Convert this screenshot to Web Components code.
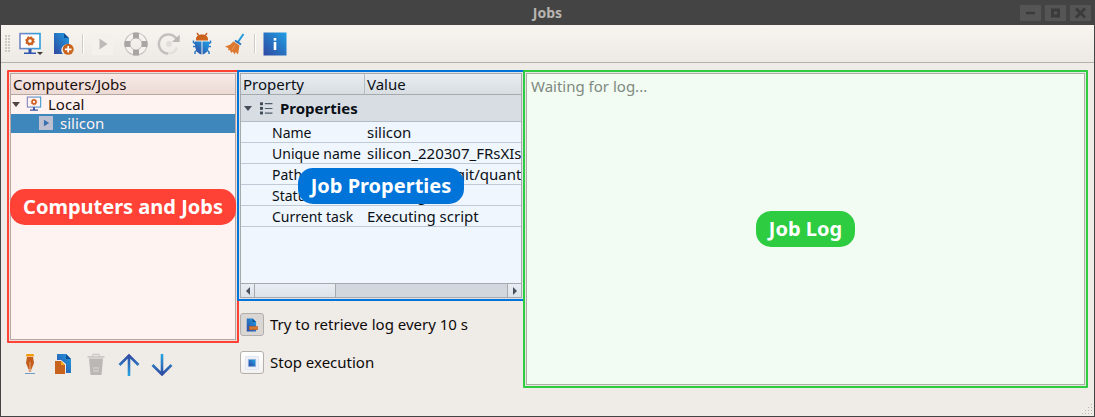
<!DOCTYPE html>
<html lang="en">
<head>
<meta charset="utf-8">
<title>Jobs</title>
<style>
  html, body { margin: 0; height: 100%; }
  body { font: 15px/18px "Noto Sans", "Open Sans", sans-serif; color: #0c0a09; background: #efebe7; }
</style>
</head>
<body>
<jobs-window></jobs-window>

<script>
const define = (name, html, setup) => {
  const template = document.createElement('template');
  template.innerHTML = html;
  customElements.define(name, class extends HTMLElement {
    constructor() {
      super();
      this.attachShadow({ mode: 'open' }).append(template.content.cloneNode(true));
    }
    connectedCallback() { if (setup) setup(this, this.shadowRoot); }
  });
};

const BLUE = '<linearGradient id="b" x1="1" y1="0" x2="0" y2="1"><stop offset="0" stop-color="#1f9fe4"/><stop offset="1" stop-color="#3048a0"/></linearGradient>';
const ORANGE = '<linearGradient id="o" x1="0" y1="0" x2="1" y2="1"><stop offset="0" stop-color="#c65a14"/><stop offset="1" stop-color="#cf6a22"/></linearGradient>';

/* All icons share a 24 x 24 grid. */
const ICONS = {
  computer: `<defs><linearGradient id="m"><stop offset="0" stop-color="#7486c4"/><stop offset="1" stop-color="#2a9fdc"/></linearGradient></defs>
    <rect x="2" y="1.600" width="20" height="15" fill="#fff" stroke="url(#m)" stroke-width="1.600"/>
    <path d="M10.500 17h3v3.400H18V22H6v-1.600h4.500z" fill="#3156ad"/>
    <circle cx="12" cy="9" r="2.900" fill="none" stroke="#cb6120" stroke-width="2.300"/>
    <circle cx="12" cy="9" r="4.200" fill="none" stroke="#cb6120" stroke-width="1.200" stroke-dasharray="1.650 1.650"/>`,
  newjob: `<path d="M3 1h10v5h5v6.500a5.800 5.800 0 0 0-6 9.500H3z" fill="url(#b)"/><path d="M13 1l5 5h-5z" fill="#0d4f94"/>
    <circle cx="17.200" cy="17.300" r="5.500" fill="url(#o)"/><path d="M17.200 14v6.600M13.900 17.300h6.600" stroke="#fff" stroke-width="1.700"/>`,
  play: `<rect x="1" y="2" width="21" height="21" fill="#f4f1ed"/><path d="M8.500 6.500l8 5.500-8 5.500z" fill="#bdbbb9"/>`,
  lifebuoy: `<circle cx="12" cy="12" r="8.600" fill="none" stroke="#bebcba" stroke-width="6"/><circle cx="12" cy="12" r="8.600" fill="none" stroke="#f5f3f0" stroke-width="4.200"/>
    <path d="M9 .8a11.500 11.500 0 0 1 6 0v5.400H9zM9 23.200a11.500 11.500 0 0 0 6 0v-5.400H9zM.8 9a11.500 11.500 0 0 0 0 6h5.400V9zM23.200 9a11.500 11.500 0 0 1 0 6h-5.400V9z" fill="#a8a5a3"/>`,
  redo: `<path d="M11 21.500A9.500 9.500 0 1 1 19.500 7" fill="none" stroke="#c3c1bf" stroke-width="2.500"/><path d="M22.700 2.500v7.500H15z" fill="#b9b7b5"/>
    <circle cx="12" cy="12" r="3" fill="#e0deda"/><path d="M11 21.500a9.500 9.500 0 0 0 9-6" fill="none" stroke="#e2e0dc" stroke-width="2.500"/>`,
  bug: `<path d="M7 1l2 3M17 1l-2 3" stroke="#cb6120" stroke-width="1.400"/><path d="M6 8.500V7a3 3 0 0 1 1-2.400C8.300 3 10 2.500 12 2.500s3.700.5 5 2.100A3 3 0 0 1 18 7v1.500z" fill="url(#o)"/>
    <path d="M6 12L3.500 10.500V8.500M18 12l2.500-1.500V8.500M6 14.500H3M18 14.500h3M7 18l-2 2v2M17 18l2 2v2" fill="none" stroke="#2d78c6" stroke-width="1.500"/>
    <path d="M5 9.500h6.500v13C7 21.500 4.500 17 5 9.500zM12.500 9.500H19C19.500 17 17 21.500 12.500 22.500z" fill="url(#b)"/>`,
  broom: `<path d="M20.500 2l-5.500 8" stroke="#269bdc" stroke-width="2"/><path d="M12 8.500l6 4" stroke="#2672bd" stroke-width="2"/>
    <path d="M10.500 9.500l6 4L15 22.500l-2.500-2.500-.8 2.500-2-3-1.200 1.500-1.700-3-1.800.2.500-2L2 14.500l5-1.800z" fill="#dc7830"/><path d="M12 13l-3 5" stroke="#efa267" stroke-width=".8"/>`,
  info: `<rect x=".5" y=".5" width="23" height="23" fill="url(#b)"/><rect x="10.700" y="6" width="2.600" height="2.600" fill="#fff"/><rect x="10.700" y="10" width="2.600" height="8" fill="#fff"/>`,
  pen: `<rect x="8" y="1" width="8" height="2.600" rx="1.200" fill="#f59b05"/><path d="M9 4h6l1 6-2.600 6.500h-2.800L8 10z" fill="#c45c1c"/>
    <path d="M12 9v7" stroke="#e7a77b"/><path d="M10.700 16.500h2.600v2.500h-2.600z" fill="#e4a67e"/><path d="M7 20.500h10" stroke="#6d9ccd"/>`,
  copy: `<path d="M6 1h9l5 5v14h-5V11l-5-4H6z" fill="url(#b)"/><path d="M15 1l5 5h-5z" fill="#0d4f94"/><path d="M4 8h6l4 4v9H4z" fill="#c8631d"/><path d="M10 8l4 4h-4z" fill="#fbb020"/>`,
  trash: `<path d="M3.500 3h17v1.800h-17z" fill="#cbc9c6"/><path d="M9 3V1.300h6V3" fill="none" stroke="#cbc9c6" stroke-width="1.300"/><path d="M5 5.500h14L17.500 22h-11z" fill="#bab7b5"/><path d="M9 14h6v5H9z" fill="#cbc9c6"/><path d="M9 16.500h6" stroke="#bab7b5"/>`,
  up: `<path d="M12 23V3M2.500 12L12 2.500 21.500 12" fill="none" stroke="url(#a)" stroke-width="2.600"/>`,
  down: `<path d="M12 1v20M2.500 12L12 21.500 21.500 12" fill="none" stroke="url(#d)" stroke-width="2.600"/>`,
  run: `<rect width="24" height="24" fill="#b8c9dc"/><path d="M8.500 6.500l9 5.500-9 5.500z" fill="#2b74b8"/>`,
  list: `<g fill="none" stroke="#3c4147" stroke-width="1.800"><rect x="1" y="1.500" width="3.500" height="3.500"/><rect x="1" y="10" width="3.500" height="3.500"/><rect x="1" y="18.500" width="3.500" height="3.500"/></g><path d="M9 3h14M9 12h14M9 20.500h14" stroke="#555b63" stroke-width="2"/>`,
  log: `<path d="M3 1h10l6 6v16H3z" fill="url(#b)"/><path d="M13 1l6 6h-6z" fill="#0d4f94"/><rect x="7" y="14" width="15" height="6.500" fill="#c8631d"/><path d="M9 17.200h11" stroke="#d98a52" stroke-width="2.500" stroke-dasharray="3 1"/>`,
  stop: `<rect x=".8" y=".8" width="22.400" height="22.400" fill="#f0f2f8" stroke="#e0e4ef" stroke-width="1.500"/><rect x="5" y="5" width="14" height="14" fill="#9ebde0"/><rect x="6.500" y="6.500" width="11" height="11" fill="url(#b)"/>`
};

define('ui-icon', `
  <style>
    :host { display: inline-block; width: 24px; height: 24px; flex: none; }
    svg { display: block; width: 100%; height: 100%; }
  </style>
  <svg viewBox="0 0 24 24" aria-hidden="true"></svg>`,
  (el, root) => {
    root.querySelector('svg').innerHTML = `<defs>${BLUE}${ORANGE}
      <linearGradient id="a" gradientUnits="userSpaceOnUse" x1="0" y1="23" x2="0" y2="2"><stop offset="0" stop-color="#27a5e2"/><stop offset="1" stop-color="#3048a0"/></linearGradient>
      <linearGradient id="d" gradientUnits="userSpaceOnUse" x1="0" y1="1" x2="0" y2="22"><stop offset="0" stop-color="#27a5e2"/><stop offset="1" stop-color="#3048a0"/></linearGradient></defs>` + ICONS[el.getAttribute('name')];
  });

define('tool-button', `
  <style>
    :host { display: block; flex: none; }
    button { position: relative; display: flex; align-items: center; justify-content: center; width: 33px; height: 33px; padding: 0; border: 0; background: none; }
    :host([menu]) button::after { content: ""; position: absolute; right: 3px; bottom: 5px; border: 3px solid transparent; border-top-color: #3b3a39; border-bottom: 0; }
  </style>
  <button type="button"></button>`,
  (el, root) => {
    const button = root.querySelector('button');
    button.innerHTML = `<ui-icon name="${el.getAttribute('icon')}"></ui-icon>`;
    button.setAttribute('aria-label', el.getAttribute('label'));
    button.disabled = el.hasAttribute('disabled');
  });

define('title-bar', `
  <style>
    :host { display: grid; grid-template-columns: 1fr auto 1fr; align-items: center; height: 25px; background: #444; color: #b8b5b0; }
    h1 { grid-column: 2; margin: 0; font: bold 14px/18px "Noto Sans", sans-serif; }
    div { display: flex; justify-content: flex-end; gap: 4px; padding-right: 3px; }
    button { width: 21px; height: 16px; padding: 0; border: 0; border-radius: 1px; background: #555; }
    svg { display: block; width: 21px; height: 16px; fill: none; stroke: #3b3b3b; stroke-width: 3; }
  </style>
  <h1><slot></slot></h1>
  <div>
    <button type="button" aria-label="Minimize"><svg viewBox="0 0 21 16"><path d="M6 8h9" stroke-width="2.500"/></svg></button>
    <button type="button" aria-label="Maximize"><svg viewBox="0 0 21 16"><rect x="7.500" y="5" width="6" height="6"/></svg></button>
    <button type="button" aria-label="Close"><svg viewBox="0 0 21 16"><path d="M6 3.500l9 9M15 3.500l-9 9"/></svg></button>
  </div>`);

define('tool-bar', `
  <style>
    :host { display: flex; align-items: center; height: 37px; padding-left: 4px; background: linear-gradient(#f8f5f1, #edeae6); border-bottom: 1px solid #b5b1ad; }
    .grip { width: 6px; height: 18px; margin-right: 2px; background: radial-gradient(circle at 1px 1px, #ccc8c4 1px, transparent 1px) 0 0 / 3px 3px; }
    .sep { width: 1px; height: 19px; margin: 0 2px 0 3px; background: #cfccc8; border-right: 1px solid #fff; }
  </style>
  <span class="grip"></span>
  <tool-button icon="computer" label="Add computer" menu></tool-button>
  <tool-button icon="newjob" label="New job"></tool-button>
  <span class="sep"></span>
  <tool-button icon="play" label="Run" disabled></tool-button>
  <tool-button icon="lifebuoy" label="Rescue" disabled></tool-button>
  <tool-button icon="redo" label="Restart" disabled></tool-button>
  <tool-button icon="bug" label="Debug"></tool-button>
  <tool-button icon="broom" label="Clean"></tool-button>
  <span class="sep"></span>
  <tool-button icon="info" label="Information"></tool-button>`);

/* A panel with a coloured frame, a light tint and a caption over its middle. */
define('marked-region', `
  <style>
    :host { display: flex; position: relative; box-sizing: border-box; min-width: 0; flex: 1; padding: 3px; }
    .panel { display: flex; flex-direction: column; flex: 1; min-width: 0; overflow: hidden; background: #fff; border: 1px solid #b2aeaa; }
    .mark { position: absolute; inset: 0; display: flex; align-items: center; justify-content: center; border: 2px solid var(--mark); border-radius: 1px; pointer-events: none; }
    .tint { position: absolute; inset: 0; background: var(--mark); opacity: .063; }
    .mark b { position: relative; padding: 4px 13px; border-radius: 15px; background: var(--mark); color: #fff; font-size: 20px; line-height: 28px; white-space: nowrap; }
  </style>
  <div class="panel"><slot></slot></div>
  <div class="mark"><span class="tint"></span><b></b></div>`,
  (el, root) => { root.querySelector('b').textContent = el.getAttribute('caption'); });

define('job-tree', `
  <style>
    :host { display: block; }
    h2 { margin: 0; padding: 1px 2px; height: 18px; font: inherit; background: linear-gradient(#f8f5f2, #ebe5e1); border-bottom: 1px solid #b2aeaa; }
    ul { list-style: none; margin: 0; padding: 0; }
    .row { display: flex; align-items: center; box-sizing: border-box; height: 19px; padding: 0 0 1px 1px; }
    .row::before { content: ""; border: 4px solid transparent; border-top: 5px solid #4a4644; border-bottom: 0; margin-right: 6px; }
    .row ui-icon { width: 16px; height: 16px; margin-right: 6px; }
    .row.leaf { padding-left: 28px; background: #308cc6; color: #fff; }
    .row.leaf::before { display: none; }
    .row.leaf ui-icon { width: 14px; height: 14px; margin-right: 7px; }
  </style>
  <h2>Computers/Jobs</h2>
  <ul role="tree" aria-label="Computers/Jobs">
    <li role="treeitem" aria-expanded="true"><div class="row"><ui-icon name="computer"></ui-icon>Local</div>
      <ul role="group"><li role="treeitem" aria-selected="true"><div class="row leaf"><ui-icon name="run"></ui-icon>silicon</div></li></ul>
    </li>
  </ul>`);

define('property-table', `
  <style>
    :host { display: flex; flex-direction: column; flex: 1; min-width: 0; }
    .view { flex: 1; overflow: hidden; }
    table { width: 100%; table-layout: fixed; border-collapse: separate; border-spacing: 0; }
    col:first-child { width: 124px; }
    th, td { box-sizing: border-box; padding: 0 0 0 2px; text-align: left; font-weight: normal; white-space: nowrap; overflow: hidden; border-bottom: 1px solid #cdd1d6; }
    thead th { height: 21px; background: linear-gradient(#f8f6f3, #e7e5e3); border-color: #b2aeaa; }
    thead th:first-child { border-right: 1px solid #c6c3c0; }
    .group th { height: 27px; padding-left: 3px; font-weight: bold; background: #e7e5e5; border-color: #bfc1c4; }
    .group div { display: flex; align-items: center; gap: 7px; }
    .group div::before { content: ""; border: 4px solid transparent; border-top: 5px solid #4a4b50; border-bottom: 0; }
    .group ui-icon { width: 13px; height: 13px; margin-left: 1px; }
    .item > * { height: 21px; }
    .item th { padding: 1px 0 0 31px; font-size: 14px; }
    .scroll { display: grid; grid-template-columns: 14px 81px 1fr 14px; height: 13px; border-top: 1px solid #b2aeaa; background: #dfdedc; }
    .scroll > * { display: flex; align-items: center; justify-content: center; box-sizing: border-box; padding: 0; border: 0; border-right: 1px solid #b2aeaa; background: linear-gradient(#f8f7f6, #eceae8); }
    .scroll > :last-child { grid-column: 4; border-right: 0; border-left: 1px solid #b2aeaa; }
    .scroll button::before { content: ""; border: 4px solid transparent; }
    .scroll .prev::before { border-right-color: #4f5157; border-left: 0; }
    .scroll .next::before { border-left-color: #4f5157; border-right: 0; }
  </style>
  <div class="view">
    <table>
      <colgroup><col><col></colgroup>
      <thead><tr><th scope="col">Property</th><th scope="col">Value</th></tr></thead>
      <tbody>
        <tr class="group"><th colspan="2" scope="rowgroup"><div><ui-icon name="list"></ui-icon>Properties</div></th></tr>
        <tr class="item"><th scope="row">Name</th><td>silicon</td></tr>
        <tr class="item"><th scope="row">Unique name</th><td>silicon_220307_FRsXIs</td></tr>
        <tr class="item"><th scope="row">Path</th><td>/home/user/git/quant</td></tr>
        <tr class="item"><th scope="row">Status</th><td>Running</td></tr>
        <tr class="item"><th scope="row">Current task</th><td>Executing script</td></tr>
      </tbody>
    </table>
  </div>
  <div class="scroll"><button class="prev" type="button" aria-label="Scroll left"></button><span></span><button class="next" type="button" aria-label="Scroll right"></button></div>`);

define('job-action', `
  <style>
    :host { display: block; }
    label { display: flex; align-items: center; gap: 6px; }
    span { padding-bottom: 2px; }
    button { display: flex; align-items: center; justify-content: center; box-sizing: border-box; width: 24px; height: 23px; padding: 0; border: 1px solid #b3afac; border-radius: 3px; background: linear-gradient(#fff, #f4f2f0); }
    button[aria-pressed="true"] { background: #dad6d3; }
    ui-icon { width: 14px; height: 14px; }
  </style>
  <label><button type="button"></button><span><slot></slot></span></label>`,
  (el, root) => {
    const button = root.querySelector('button');
    button.innerHTML = `<ui-icon name="${el.getAttribute('icon')}"></ui-icon>`;
    if (el.hasAttribute('pressed')) button.setAttribute('aria-pressed', 'true');
  });

define('job-log', `
  <style>
    :host { display: flex; flex: 1; }
    textarea { flex: 1; min-width: 0; box-sizing: border-box; padding: 3px 4px; border: 0; outline: 0; resize: none; background: none; color: #858585; font: inherit; }
  </style>
  <textarea readonly aria-label="Job log">Waiting for log...</textarea>`);

define('jobs-window', `
  <style>
    :host { display: flex; flex-direction: column; box-sizing: border-box; min-height: 100%; border: solid #444; border-width: 0 1px 1px; background: #efebe7; }
    main { position: relative; flex: 1; display: grid; grid-template-columns: 230px 286px minmax(0, 1fr); padding: 7px 6px 28px; }
    section { display: flex; flex-direction: column; min-width: 0; }
    .jobs marked-region, .props marked-region { margin-right: -2px; }
    .jobs marked-region { --mark: #ff4136; }
    .props marked-region { --mark: #0074d9; }
    .log marked-region { --mark: #2ecc40; }
    .bar { display: flex; align-items: center; height: 43px; padding: 0 0 2px 6px; }
    .actions { display: flex; flex-direction: column; gap: 15px; padding: 12px 3px 14px; }
    .size-grip { position: absolute; right: 1px; bottom: 1px; width: 12px; height: 12px; fill: #bbb7b3; }
  </style>
  <title-bar>Jobs</title-bar>
  <tool-bar></tool-bar>
  <main>
    <section class="jobs">
      <marked-region caption="Computers and Jobs"><job-tree></job-tree></marked-region>
      <div class="bar">
        <tool-button icon="pen" label="Rename"></tool-button>
        <tool-button icon="copy" label="Duplicate"></tool-button>
        <tool-button icon="trash" label="Delete" disabled></tool-button>
        <tool-button icon="up" label="Move up"></tool-button>
        <tool-button icon="down" label="Move down"></tool-button>
      </div>
    </section>
    <section class="props">
      <marked-region caption="Job Properties"><property-table></property-table></marked-region>
      <div class="actions">
        <job-action icon="log" pressed>Try to retrieve log every 10 s</job-action>
        <job-action icon="stop">Stop execution</job-action>
      </div>
    </section>
    <section class="log">
      <marked-region caption="Job Log"><job-log></job-log></marked-region>
    </section>
    <svg class="size-grip" viewBox="0 0 12 12" aria-hidden="true"><path d="M10 1h1v1h-1zM7 4h1v1h-1zM10 4h1v1h-1zM4 7h1v1h-1zM7 7h1v1h-1zM10 7h1v1h-1zM1 10h1v1h-1zM4 10h1v1h-1zM7 10h1v1h-1zM10 10h1v1h-1z"/></svg>
  </main>`);
</script>
</body>
</html>
